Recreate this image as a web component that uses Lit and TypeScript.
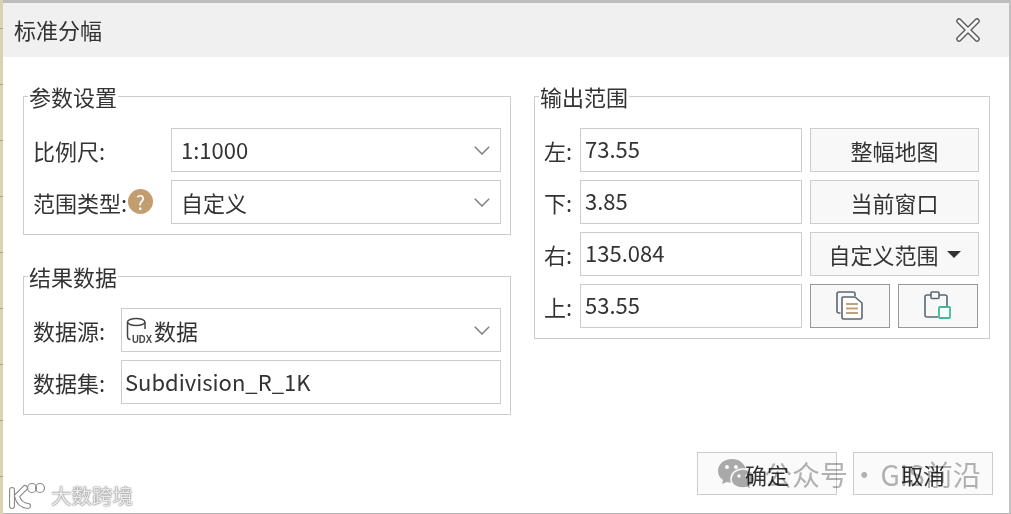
import { css, html, LitElement, svg } from 'lit';
import { customElement } from 'lit/decorators.js';

const chevron = html`<svg class="chev" width="16" height="9" viewBox="0 0 16 9"><path d="M0.8 0.8 L8 8 L15.2 0.8" fill="none" stroke="#808080" stroke-width="1.5"/></svg>`;

@customElement('app-root')
export class AppRoot extends LitElement {
  static get styles() {
    return css`
      :host {
        display: block;
        width: 1011px;
        height: 514px;
        position: relative;
        overflow: hidden;
        font-family: "Noto Sans CJK SC", "Noto Sans", sans-serif;
        font-size: 22px;
        color: #333;
        background: repeating-linear-gradient(to bottom, #d8d4b0 0 28px, #a8a690 28px 29px, #d8d4b0 29px 56px);
      }

      .window {
        box-sizing: border-box;
        margin-left: 3px;
        height: 100%;
        display: flex;
        flex-direction: column;
        background: #fff;
        border-top: 3px solid #bdbdbd;
        border-right: 2px solid #c0c0c0;
        border-bottom: 1px solid #b5b5b5;
      }

      .titlebar {
        box-sizing: border-box;
        height: 54px;
        flex: none;
        display: flex;
        align-items: center;
        justify-content: space-between;
        background: #f0f0f0;
        padding: 0 28px 0 11px;
        line-height: 1;
      }

      .titlebar span { margin-bottom: 3px; }

      .body {
        flex: 1;
        display: grid;
        grid-template-columns: 488px 456px;
        column-gap: 23px;
        align-items: start;
        padding: 27px 0 0 20px;
      }

      .col {
        display: flex;
        flex-direction: column;
        gap: 29px;
      }

      fieldset {
        margin: 0;
        min-width: 0;
        border: 1px solid #ccc;
        padding: 20px 9px 10px 10px;
        display: flex;
        flex-direction: column;
        gap: 8px;
      }

      legend {
        padding: 0 1px;
        margin-left: -6px;
        line-height: 24px;
        height: 24px;
      }

      .row {
        display: grid;
        grid-template-columns: var(--label) 1fr;
        align-items: center;
      }

      .group-params { --label: 137px; }
      .group-result { --label: 87px; }

      .label {
        display: flex;
        align-items: center;
        white-space: nowrap;
        margin-left: -1px;
      }

      .help {
        width: 25px;
        height: 25px;
        flex: none;
        margin: 0 0 1px 1px;
        border-radius: 50%;
        background: #c29d6f;
        color: #fff;
        font-size: 19px;
        line-height: 25px;
        text-align: center;
      }

      .field {
        box-sizing: border-box;
        height: 44px;
        border: 1px solid #ccc;
        background: #fff;
        display: flex;
        align-items: center;
        justify-content: space-between;
        padding: 0 10px 0 9px;
        line-height: 1;
      }

      .latin { margin-bottom: 3px; }

      .source {
        padding-left: 4px;
        justify-content: flex-start;
      }

      .source .chev { margin-left: auto; }

      .dataset { padding-left: 3px; }

      .extent {
        display: grid;
        grid-template-columns: 27px 222px 169px;
        column-gap: 8px;
        row-gap: 8px;
        align-items: center;
      }

      .num {
        padding: 0 4px 4px;
        justify-content: flex-start;
      }

      .btn {
        box-sizing: border-box;
        height: 44px;
        border: 1px solid #ccc;
        background: #f8f8f8;
        display: flex;
        align-items: center;
        justify-content: center;
        line-height: 1;
      }

      .drop { gap: 8px; }

      .caret {
        width: 0;
        height: 0;
        border-left: 7px solid transparent;
        border-right: 7px solid transparent;
        border-top: 7px solid #333;
      }

      .tools {
        display: flex;
        gap: 8px;
      }

      .tool {
        width: 80px;
        border-color: #999;
      }

      .footer {
        flex: none;
        display: flex;
        justify-content: flex-end;
        gap: 16px;
        padding: 0 16px 18px 0;
      }

      .footer .btn {
        width: 140px;
        height: 43px;
        background: #fafafa;
      }

      .mark-wechat {
        position: absolute;
        left: 718px;
        top: 456px;
        display: flex;
        align-items: center;
        gap: 8px;
        font-size: 28px;
        line-height: 36px;
        word-spacing: -4px;
        color: #b4b4b4;
        white-space: nowrap;
        mix-blend-mode: multiply;
        pointer-events: none;
      }

      .mark-brand {
        position: absolute;
        left: 8px;
        top: 480px;
        display: flex;
        align-items: center;
        gap: 5px;
        font-size: 20.5px;
        line-height: 30px;
        color: #ececec;
        text-shadow: 0 0 2px #777, 0 0 1px #777;
        white-space: nowrap;
        pointer-events: none;
      }
    `;
  }

  private extentRow(label: string, value: string, action: unknown) {
    return html`
      <div class="label">${label}</div>
      <div class="field num">${value}</div>
      ${action}
    `;
  }

  render() {
    const closeIcon = html`<svg width="26" height="26" viewBox="0 0 26 26">
      <path d="M4 4 L22 22 M22 4 L4 22" stroke="#555" stroke-width="5.5" stroke-linecap="round" fill="none"/>
      <path d="M4 4 L22 22 M22 4 L4 22" stroke="#f6f6f6" stroke-width="3" stroke-linecap="round" fill="none"/>
    </svg>`;

    const udxIcon = html`<svg width="28" height="30" viewBox="0 0 28 30">
      <path d="M1.500 7 V21 Q1.500 24.500 4.500 24.500 M19 7 V14" fill="none" stroke="#444" stroke-width="1.5"/>
      <ellipse cx="10.200" cy="7" rx="8.700" ry="3.500" fill="none" stroke="#444" stroke-width="1.5"/>
      ${svg`<text x="6" y="27.500" font-family="Liberation Sans, sans-serif" font-size="11" font-weight="700" textLength="20" lengthAdjust="spacingAndGlyphs" fill="#444">UDX</text>`}
    </svg>`;

    const copyIcon = html`<svg width="28" height="30" viewBox="0 0 28 30">
      <path d="M4.500 22 H3 Q1 22 1 20 V3 Q1 1 3 1 H17 Q19 1 19 3 V5" fill="none" stroke="#5c6670" stroke-width="1.6"/>
      <path d="M6 7 Q6 6 7 6 H19 L26 12 V26.500 Q26 28 24.500 28 H7.500 Q6 28 6 26.500 Z" fill="#fff" stroke="#5c6670" stroke-width="1.6"/>
      <path d="M10 13 H22 M10 17.500 H22 M10 22 H22" stroke="#bfa27c" stroke-width="2.200"/>
    </svg>`;

    const pasteIcon = html`<svg width="28" height="30" viewBox="0 0 28 30">
      <path d="M7 4 H3 Q1 4 1 6 V24 Q1 26 3 26 H14 M15 4 H21 Q23 4 23 6 V15" fill="none" stroke="#5c6670" stroke-width="1.6"/>
      <rect x="7" y="1" width="8" height="6.500" rx="1" fill="none" stroke="#5c6670" stroke-width="1.6"/>
      <rect x="15" y="16" width="11" height="11" rx="1" fill="#fff" stroke="#3fb8a0" stroke-width="1.8"/>
    </svg>`;

    const wechatIcon = html`<svg width="38" height="34" viewBox="0 0 38 34">
      <path d="M14 2 C6 2 0 7 0 14 C0 18 2 21 5 23 L4 27 L9 25 C11 25.500 13 26 15 25.800 L28 12 C26 6 21 2 14 2 Z" fill="#adadad"/>
      <path d="M25 12 C18 12 13 16.500 13 22 C13 27.500 18 31 25 31 C27 31 28 31 29 30.500 L33 33 L32 29 C35 27 37 25 37 22 C37 16.500 32 12 25 12 Z" fill="#adadad" stroke="#fff" stroke-width="1.500"/>
      <circle cx="9" cy="10" r="2" fill="#fff"/><circle cx="18" cy="10" r="2" fill="#fff"/>
      <circle cx="21" cy="19" r="1.700" fill="#fff"/><circle cx="29" cy="19" r="1.700" fill="#fff"/>
    </svg>`;

    const brandIcon = html`<svg width="38" height="30" viewBox="0 0 38 30">
      <g fill="none" stroke-linecap="round">
        <path d="M4 10 V26 M17 8 L9 16 Q11 25 20 26" stroke="#8a8a8a" stroke-width="6"/>
        <path d="M4 10 V26 M17 8 L9 16 Q11 25 20 26" stroke="#fff" stroke-width="3.800"/>
        <circle cx="24" cy="8" r="4.500" stroke="#8a8a8a" stroke-width="1.200"/>
        <circle cx="32" cy="8" r="4.500" stroke="#8a8a8a" stroke-width="1.200"/>
      </g>
    </svg>`;

    return html`
      <div class="window">
        <div class="titlebar"><span>标准分幅</span>${closeIcon}</div>
        <div class="body">
          <div class="col">
            <fieldset class="group-params">
              <legend>参数设置</legend>
              <div class="row">
                <div class="label">比例尺:</div>
                <div class="field"><span class="latin">1:1000</span>${chevron}</div>
              </div>
              <div class="row">
                <div class="label">范围类型:<span class="help">?</span></div>
                <div class="field">自定义${chevron}</div>
              </div>
            </fieldset>
            <fieldset class="group-result">
              <legend>结果数据</legend>
              <div class="row">
                <div class="label">数据源:</div>
                <div class="field source">${udxIcon}数据${chevron}</div>
              </div>
              <div class="row">
                <div class="label">数据集:</div>
                <div class="field dataset"><span class="latin">Subdivision_R_1K</span></div>
              </div>
            </fieldset>
          </div>
          <fieldset>
            <legend>输出范围</legend>
            <div class="extent">
              ${this.extentRow('左:', '73.55', html`<div class="btn">整幅地图</div>`)}
              ${this.extentRow('下:', '3.85', html`<div class="btn">当前窗口</div>`)}
              ${this.extentRow('右:', '135.084', html`<div class="btn drop">自定义范围<span class="caret"></span></div>`)}
              ${this.extentRow('上:', '53.55', html`<div class="tools"><div class="btn tool">${copyIcon}</div><div class="btn tool">${pasteIcon}</div></div>`)}
            </div>
          </fieldset>
        </div>
        <div class="footer">
          <div class="btn">确定</div>
          <div class="btn">取消</div>
        </div>
      </div>
      <div class="mark-wechat">${wechatIcon}<span>公众号 · GIS前沿</span></div>
      <div class="mark-brand">${brandIcon}<span>大数跨境</span></div>
    `;
  }
}
